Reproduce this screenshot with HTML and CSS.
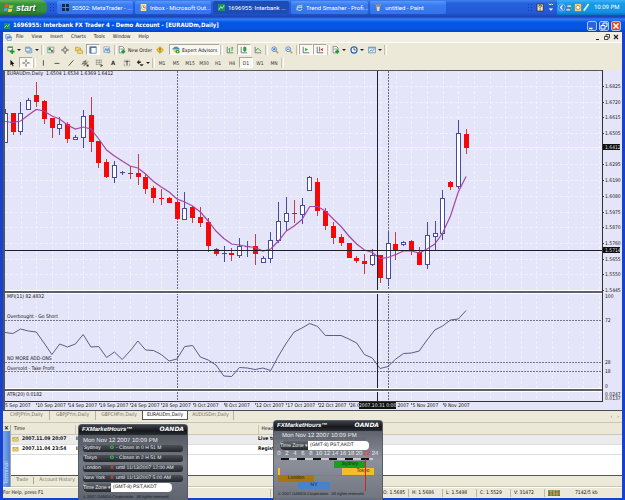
FILE: index.html
```html
<!DOCTYPE html>
<html lang="en">
<head>
<meta charset="utf-8">
<title>1696955: Interbank FX Trader 4 - Demo Account - [EURAUDm,Daily]</title>
<link rel="stylesheet" href="styles.css">
</head>
<body>
<svg class="defs" aria-hidden="true">
  <symbol id="i-add" viewBox="0 0 10 10"><path d="M1 1h6v5H1z" fill="#f4faf4" stroke="#5d8f68"/><path d="M1 1h6v1.500H1z" fill="#4b9a63"/><path d="M6.500 4v6M3.500 7h6" stroke="#12a022" stroke-width="2"/></symbol>
  <symbol id="i-profiles" viewBox="0 0 10 10"><path d="M2.500 3.500h6v5h-6z" fill="#cfe2f4" stroke="#6d93bb"/><path d="M.5 1.500h6v5h-6z" fill="#e9f3fc" stroke="#5f86b0"/><path d="M1 2h5v1.200H1z" fill="#5b8fc8"/></symbol>
  <symbol id="i-market" viewBox="0 0 10 10"><path d="M1 1.500h7.500v7H1z" fill="#eef6f6" stroke="#6a93a5"/><circle cx="3.500" cy="4" r="1.700" fill="#2aa24a"/><circle cx="6.300" cy="6.300" r="1.600" fill="#d0503a"/></symbol>
  <symbol id="i-target" viewBox="0 0 10 10"><circle cx="5" cy="5" r="2.700" fill="none" stroke="#777"/><path d="M5 0v4M5 6v4M0 5h4M6 5h4" stroke="#555"/></symbol>
  <symbol id="i-folder" viewBox="0 0 10 10"><path d="M.7 1.500h3l.8 1h2.500v3.500H.7z" fill="#f4d670" stroke="#b08d2c" stroke-width=".8"/><path d="M3.500 5h3l.8 1h2.200v3.200h-6z" fill="#f8df82" stroke="#b08d2c" stroke-width=".8"/></symbol>
  <symbol id="i-terminal" viewBox="0 0 10 10"><path d="M1 1h8v8H1z" fill="#fff" stroke="#4c78b4"/><path d="M1 1h8v1.500H1zM1 1h2v8H1z" fill="#4c78b4"/></symbol>
  <symbol id="i-tester" viewBox="0 0 10 10"><path d="M1 1h7v7H1z" fill="#eef4fb" stroke="#8aa5c8"/><path d="M2 7l1.500-4 1.500 3 1.500-3L8 6" fill="none" stroke="#3b72ad"/><circle cx="7" cy="7" r="1.700" fill="none" stroke="#7a93b4"/></symbol>
  <symbol id="i-order" viewBox="0 0 10 10"><path d="M1.500.5h4l2 2v6h-6z" fill="#fff" stroke="#777"/><path d="M3 3h3M3 4.500h3" stroke="#9ab"/><path d="M6.500 4.500v5M4 7h5" stroke="#14a526" stroke-width="2"/></symbol>
  <symbol id="i-warn" viewBox="0 0 10 10"><path d="M5 .8L9.200 5 5 9.200.8 5z" fill="#f6c53b" stroke="#b88a1c"/><path d="M5 2.500v3M5 6.500v1" stroke="#6a4a00" stroke-width="1.200"/></symbol>
  <symbol id="i-expert" viewBox="0 0 10 10"><path d="M.5 4Q5-2 9.500 4z" fill="#3f9fd8" stroke="#28719e" stroke-width=".6"/><path d="M1.500 4.500h6.500L7 8H2.500z" fill="#f0cb55"/><circle cx="7" cy="7" r="2.500" fill="#22a336"/><path d="M6.200 5.700L8.300 7 6.200 8.300z" fill="#fff"/></symbol>
  <symbol id="i-bars" viewBox="0 0 10 10"><path d="M1.500 1v7.500H9" fill="none" stroke="#666"/><path d="M4.500 2.500v5M4.500 4H3M7.500 1v5.500M7.500 2.500H9" stroke="#1d9a3a" fill="none"/></symbol>
  <symbol id="i-candles" viewBox="0 0 10 10"><path d="M1.500 1v7.500H9" fill="none" stroke="#666"/><path d="M6 .5v7" stroke="#18842c"/><path d="M4.500 2h3v4h-3z" fill="#26b544" stroke="#18842c" stroke-width=".7"/></symbol>
  <symbol id="i-line" viewBox="0 0 10 10"><path d="M1.500 1v7.500H9" fill="none" stroke="#666"/><path d="M2.500 6Q4 2 5.500 3.500T9 6.500" stroke="#1d9a3a" fill="none"/></symbol>
  <symbol id="i-zoomin" viewBox="0 0 10 10"><path d="M6 6l3 3" stroke="#c49a38" stroke-width="1.700"/><circle cx="4" cy="4" r="3" fill="#dceefc" stroke="#4a80c0"/><path d="M4 2.500v3M2.500 4h3" stroke="#2567b2"/></symbol>
  <symbol id="i-zoomout" viewBox="0 0 10 10"><path d="M6 6l3 3" stroke="#c49a38" stroke-width="1.700"/><circle cx="4" cy="4" r="3" fill="#dceefc" stroke="#4a80c0"/><path d="M2.500 4h3" stroke="#2567b2"/></symbol>
  <symbol id="i-scroll" viewBox="0 0 10 10"><path d="M1.500 1v7.500H9" fill="none" stroke="#555"/><path d="M4 2.500L7.500 4.500 4 6.500z" fill="#1fa53a"/></symbol>
  <symbol id="i-shift" viewBox="0 0 10 10"><path d="M1.500 1v7.500H9M4.500 1v6" fill="none" stroke="#555"/><path d="M5.500 4.500L8.500 2.500v4z" fill="#c0392b"/></symbol>
  <symbol id="i-clock" viewBox="0 0 10 10"><circle cx="5" cy="5" r="3.800" fill="#f2f8ff" stroke="#2766b0" stroke-width="1.500"/><path d="M5 2.700V5h2" fill="none" stroke="#335"/></symbol>
  <symbol id="i-template" viewBox="0 0 10 10"><path d="M.5 1.500h9v7h-9z" fill="#dcebf7" stroke="#6a8fb2"/><path d="M.5 1.500h9V3h-9z" fill="#6a9cc8"/><path d="M2 7l2-2 1.500 1L8 4" fill="none" stroke="#3a78a5"/></symbol>
  <symbol id="i-cursor" viewBox="0 0 10 10"><path d="M3 1v7l1.700-1.500L6 9.300l1-.5-1.200-2.600H8z" fill="#111"/></symbol>
  <symbol id="i-cross" viewBox="0 0 10 10"><path d="M5 .5v3.500M5 6v3.500M.5 5H4M6 5h3.500" stroke="#333"/></symbol>
  <symbol id="i-vline" viewBox="0 0 10 10"><path d="M5.500 1.500v7" stroke="#333"/></symbol>
  <symbol id="i-hline" viewBox="0 0 10 10"><path d="M2 5.500h6" stroke="#333"/></symbol>
  <symbol id="i-trend" viewBox="0 0 10 10"><path d="M2 8.500l6-7" stroke="#333"/></symbol>
  <symbol id="i-channel" viewBox="0 0 10 10"><path d="M1 7l6-6M3 9l6-6M2 3.500h5M1 6h7M5 2v6" stroke="#444" stroke-width=".8"/><path d="M7 7h2.500v2.500H7z" fill="#333"/></symbol>
  <symbol id="i-fibo" viewBox="0 0 10 10"><path d="M1 1.500h8M1 4h8M1 6.500h6" stroke="#555" stroke-dasharray="1.500 .5"/><path d="M7.500 6v4M7.500 8H10" stroke="#333"/></symbol>
  <symbol id="i-label" viewBox="0 0 10 10"><path d="M1.500 1.500h7v7h-7z" fill="none" stroke="#777" stroke-dasharray="1 1"/><path d="M3 3h4M5 3v4.500" stroke="#222"/></symbol>
  <symbol id="i-arrows" viewBox="0 0 10 10"><path d="M1 4L4 1v2h2v2H4v2z" fill="#222"/><path d="M9.500 7L7 9.500V8H5V6.500h4z" fill="#222"/></symbol>
  <symbol id="i-chart" viewBox="0 0 10 10"><path d="M0 0h10v10H0z" fill="#218a66"/><path d="M1 8l3-4 2 2 3-4" fill="none" stroke="#8be6a8" stroke-width="1.500"/></symbol>
  <symbol id="i-mail" viewBox="0 0 10 10"><path d="M.5 2.500h9v6h-9z" fill="#f7dd86" stroke="#b18e36"/><path d="M.5 2.500L5 6l4.500-3.500" fill="none" stroke="#b18e36"/></symbol>
</svg>

<div class="desktop">
  <header class="taskbar">
    <button class="start" type="button">
      <svg viewBox="0 0 12 12" aria-hidden="true"><path d="M1 2q2.500-1.500 4.500 0L4.700 5.500Q2.500 4.500.5 5.700z" fill="#f0532a"/><path d="M6.300 2.200q2.500 1.300 5 0l-1 3.500q-2.400 1.200-4.700 0z" fill="#8bd34a"/><path d="M.3 6.500q2.200-1.200 4.300 0L3.700 10q-2.200-1.300-4.300 0z" fill="#5a9cf5"/><path d="M5.400 6.700q2.500 1.200 4.800 0l-1 3.600q-2.400 1.200-4.700-.1z" fill="#fbd13c"/></svg>
      <span>start</span>
    </button>
    <span class="grip"></span>
    <nav class="tasks">
      <button type="button"><svg viewBox="0 0 10 10" aria-hidden="true"><path d="M0 0h10v10H0z" fill="#15294f"/><path d="M5 0v10M0 5h10" stroke="#6fa6e6"/></svg><span>50502: MetaTrader - ...</span></button>
      <button type="button"><svg viewBox="0 0 10 10" aria-hidden="true"><path d="M1 0h8v10H1z" fill="#fbe7a6"/><circle cx="5" cy="5" r="3" fill="#fff" stroke="#d8912a"/><path d="M5 3v2h2" stroke="#555" fill="none"/></svg><span>Inbox - Microsoft Out...</span></button>
      <button type="button" class="active"><svg aria-hidden="true"><use href="#i-chart"/></svg><span>1696955: Interbank ...</span></button>
      <button type="button"><svg viewBox="0 0 10 10" aria-hidden="true"><path d="M8.500 6.500A3.500 3.500 0 1 1 8.500 5H3" fill="none" stroke="#8fd4ff" stroke-width="1.700"/><path d="M1 9Q0 6 5 3t4.500-1" fill="none" stroke="#f4cd4a"/></svg><span>Trend Smasher - Profi...</span></button>
      <button type="button"><svg viewBox="0 0 10 10" aria-hidden="true"><path d="M2 4h5L6 10H3z" fill="#e9d9b5"/><path d="M3 4L1 0M4.500 4V0M6 4l2.500-4" stroke="#e0a23c" stroke-width="1.300"/></svg><span>untitled - Paint</span></button>
    </nav>
    <span class="grip"></span>
    <svg class="tools" viewBox="0 0 22 10" aria-hidden="true"><path d="M1 1h7v8H1z" fill="#efe7c8" stroke="#333"/><path d="M3 4q0-2 1.500-2T6 3.500L4.500 5v1M4.500 7v1" stroke="#222" fill="none"/><path d="M14 1l1.500 1L17 1M17 1l1 1 1-1" stroke="#fff" fill="none"/><path d="M14 6h5l-2.500 2.500z" fill="#fff"/></svg>
    <div class="tray">
      <svg viewBox="0 0 36 10" aria-hidden="true"><circle cx="4" cy="5" r="4" fill="#2f83ea" stroke="#9bd0ff" stroke-width=".7"/><path d="M5 2.500L2.800 5 5 7.500" fill="none" stroke="#fff" stroke-width="1.300"/><path d="M10 2h5v3h-5zM9 6h5v3H9z" fill="#b9d8ee" stroke="#355f91" stroke-width=".6"/><path d="M15.500 3v4" stroke="#41c452"/><path d="M19 1h7v8h-7z" fill="#f6d578"/><circle cx="22.500" cy="5" r="2.300" fill="#fff" stroke="#c38532"/><path d="M29 8.500L34.500 1" stroke="#eaf6ff" stroke-width="2"/></svg>
      <time>10:09 PM</time>
    </div>
  </header>

  <main class="window">
    <div class="titlebar">
      <svg aria-hidden="true"><use href="#i-chart"/></svg>
      <h1>1696955: Interbank FX Trader 4 - Demo Account - [EURAUDm,Daily]</h1>
      <div class="winbtns">
        <button type="button" aria-label="Minimize"><svg viewBox="0 0 8 8"><path d="M1 6.500h3.500" stroke="#fff" stroke-width="1.500"/></svg></button>
        <button type="button" aria-label="Restore"><svg viewBox="0 0 8 8"><path d="M3 3V1h4v3.500H5.500M1 3.500h4V7H1z" stroke="#fff" fill="none"/></svg></button>
        <button type="button" class="close" aria-label="Close"><svg viewBox="0 0 8 8"><path d="M1.500 1.500l5 5M6.500 1.500l-5 5" stroke="#fff" stroke-width="1.500"/></svg></button>
      </div>
    </div>

    <nav class="menubar">
      <svg viewBox="0 0 10 10" aria-hidden="true"><path d="M1 1h6v5H1zM3 4h6v5H3z" fill="#eaf4fd" stroke="#4c86c4"/><path d="M3 4h6v1.500H3z" fill="#4c86c4"/></svg>
      <a href="#file">File</a><a href="#view">View</a><a href="#insert">Insert</a><a href="#charts">Charts</a><a href="#tools">Tools</a><a href="#window">Window</a><a href="#help">Help</a>
      <div class="mdi">
        <button type="button" aria-label="Minimize chart"><svg viewBox="0 0 8 8"><path d="M2 6.500h3" stroke="#222"/></svg></button>
        <button type="button" aria-label="Restore chart"><svg viewBox="0 0 8 8"><path d="M3 3V1.500h3.500V5H5.500M1.500 3.500h3.500v3h-3.500z" stroke="#222" fill="none" stroke-width=".8"/></svg></button>
        <button type="button" aria-label="Close chart"><svg viewBox="0 0 8 8"><path d="M2 2l4 4M6 2L2 6" stroke="#222" stroke-width="1.200"/></svg></button>
      </div>
    </nav>

    <div class="toolbar">
      <button type="button" class="drop" aria-label="New chart"><svg><use href="#i-add"/></svg></button>
      <button type="button" class="drop" aria-label="Profiles"><svg><use href="#i-profiles"/></svg></button>
      <span class="sep"></span>
      <button type="button" aria-label="Market Watch"><svg><use href="#i-market"/></svg></button>
      <button type="button" aria-label="Data Window"><svg><use href="#i-target"/></svg></button>
      <button type="button" aria-label="Navigator"><svg><use href="#i-folder"/></svg></button>
      <button type="button" class="on" aria-label="Terminal"><svg><use href="#i-terminal"/></svg></button>
      <button type="button" aria-label="Strategy Tester"><svg><use href="#i-tester"/></svg></button>
      <span class="sep"></span>
      <button type="button" class="text"><svg><use href="#i-order"/></svg>New Order</button>
      <button type="button" aria-label="Alerts"><svg><use href="#i-warn"/></svg></button>
      <button type="button" class="text on"><svg><use href="#i-expert"/></svg>Expert Advisors</button>
      <span class="sep"></span>
      <button type="button" aria-label="Bar chart"><svg><use href="#i-bars"/></svg></button>
      <button type="button" class="on" aria-label="Candlesticks"><svg><use href="#i-candles"/></svg></button>
      <button type="button" aria-label="Line chart"><svg><use href="#i-line"/></svg></button>
      <span class="sep"></span>
      <button type="button" aria-label="Zoom in"><svg><use href="#i-zoomin"/></svg></button>
      <button type="button" aria-label="Zoom out"><svg><use href="#i-zoomout"/></svg></button>
      <span class="sep"></span>
      <button type="button" class="on" aria-label="Auto scroll"><svg><use href="#i-scroll"/></svg></button>
      <button type="button" class="on" aria-label="Chart shift"><svg><use href="#i-shift"/></svg></button>
      <span class="sep"></span>
      <button type="button" class="drop" aria-label="Indicators"><svg><use href="#i-order"/></svg></button>
      <button type="button" class="drop" aria-label="Periods"><svg><use href="#i-clock"/></svg></button>
      <button type="button" class="drop" aria-label="Templates"><svg><use href="#i-template"/></svg></button>
      <span class="sep"></span>
    </div>
    <div class="toolbar">
      <button type="button" aria-label="Cursor"><svg><use href="#i-cursor"/></svg></button>
      <button type="button" class="on" aria-label="Crosshair"><svg><use href="#i-cross"/></svg></button>
      <span class="sep"></span>
      <button type="button" aria-label="Vertical line"><svg><use href="#i-vline"/></svg></button>
      <button type="button" aria-label="Horizontal line"><svg><use href="#i-hline"/></svg></button>
      <button type="button" aria-label="Trendline"><svg><use href="#i-trend"/></svg></button>
      <button type="button" aria-label="Equidistant channel"><svg><use href="#i-channel"/></svg></button>
      <button type="button" aria-label="Fibonacci"><svg><use href="#i-fibo"/></svg></button>
      <button type="button" class="letter">A</button>
      <button type="button" aria-label="Text label"><svg><use href="#i-label"/></svg></button>
      <button type="button" class="drop" aria-label="Arrows"><svg><use href="#i-arrows"/></svg></button>
      <span class="sep"></span>
      <button type="button">M1</button><button type="button">M5</button><button type="button">M15</button><button type="button">M30</button><button type="button">H1</button><button type="button">H4</button><button type="button" class="on">D1</button><button type="button">W1</button><button type="button">MN</button>
      <span class="sep"></span>
    </div>

    <section class="chart">
      <div class="plot">
        <svg id="plot" viewBox="5 70 597 332" preserveAspectRatio="none" role="img" aria-label="EURAUDm daily candles, MFI and ATR"></svg>
        <p class="note n-symbol">EURAUDm,Daily&nbsp; 1.6504 1.6534 1.6369 1.6412</p>
        <p class="note n-mfi">MFI(11) 82.4832</p>
        <p class="note n-short">Overbought - Go Short</p>
        <p class="note n-addons">NO MORE ADD-ONS</p>
        <p class="note n-take">Oversold - Take Profit</p>
        <p class="note n-atr">ATR(20) 0.0182</p>
      </div>
      <svg id="axis" viewBox="602 70 20 332"></svg>
      <div class="dates">
        <span>5 Sep 2007</span><span>10 Sep 2007</span><span>14 Sep 2007</span><span>19 Sep 2007</span><span>24 Sep 2007</span><span>28 Sep 2007</span><span>3 Oct 2007</span><span>8 Oct 2007</span><span>12 Oct 2007</span><span>17 Oct 2007</span><span>22 Oct 2007</span><span>26 Oct 2007</span><span>31 Oct 2007</span><span>5 Nov 2007</span><span>9 Nov 2007</span>
        <b class="cursor-date">2007.10.31 0:00</b>
      </div>
    </section>

    <nav class="charttabs">
      <a href="#c1">CHFJPYm,Daily</a><a href="#c2">GBPJPYm,Daily</a><a href="#c3">GBPCHFm,Daily</a><a href="#c4" class="active">EURAUDm,Daily</a><a href="#c5">AUDUSDm,Daily</a>
      <div class="arrows"><button type="button" aria-label="Scroll left">‹</button><button type="button" aria-label="Scroll right">›</button></div>
    </nav>

    <section class="terminal">
      <div class="side"><button type="button" aria-label="Close terminal">×</button><span>Terminal</span></div>
      <div class="mailbox">
        <table>
          <thead><tr><th class="c-time">Time</th><th class="c-from">From</th><th>Headline</th></tr></thead>
          <tbody>
            <tr><td><svg aria-hidden="true"><use href="#i-mail"/></svg>2007.11.09 20:07</td><td>Interbank FX</td><td>Live trading will reopen in nearly one hour</td></tr>
            <tr><td><svg aria-hidden="true"><use href="#i-mail"/></svg>2007.11.04 23:54</td><td>Interbank FX</td><td>Registration</td></tr>
          </tbody>
        </table>
        <nav class="termtabs"><a href="#trade">Trade</a><a href="#history">Account History</a></nav>
      </div>
    </section>

    <footer class="status">
      <span class="help">For Help, press F1</span><span class="open">O: 1.5685</span><span>H: 1.5686</span><span>L: 1.5498</span><span>C: 1.5529</span><span>V: 31472</span>
      <span class="conn"><svg viewBox="0 0 12 6" aria-hidden="true"><path d="M0 0h12v6H0z" fill="#71983e"/><path d="M0 5.500h12M1 3h4M7 2h4" stroke="#b5472f" stroke-width="1.500"/><path d="M3 0v6M6 0v6M9 0v6" stroke="#d6d7a0" stroke-width=".6"/></svg>7142/5 kb</span>
    </footer>
  </main>

  <aside class="gadget g-list">
    <div class="ghead"><b>FXMarketHours™</b><strong>OANDA</strong></div>
    <p class="now">Mon Nov 12 2007 10:09 PM</p>
    <ul>
      <li><span>Sydney</span><i class="open">O</i>- Closes in 0 H 51 M</li>
      <li><span>Tokyo</span><i class="open">O</i>- Closes in 2 H 51 M</li>
      <li><span>London</span><i>X</i>until 11/13/2007 12:00 AM</li>
      <li><span>New York</span><i>X</i>until 11/13/2007 5:00 AM</li>
    </ul>
    <div class="zone"><button type="button">Time Zone ▾</button><span>(GMT-8) PST,AKDT</span></div>
    <p class="copy">© 2007 OANDA Corporation. &nbsp;All rights reserved.</p>
  </aside>

  <aside class="gadget g-bars">
    <div class="ghead"><b>FXMarketHours™</b><strong>OANDA</strong></div>
    <p class="now">Mon Nov 12 2007 10:09 PM</p>
    <div class="zone"><button type="button">Time Zone ▾</button><span>(GMT-8) PST,AKDT</span></div>
    <div class="hours"><span>0</span><span>2</span><span>4</span><span>6</span><span>8</span><span>10</span><span>12</span><span>14</span><span>16</span><span>18</span><span>20</span><span class="current">22</span><span>24</span></div>
    <div class="sessions">
      <span class="sydney">Sydney</span>
      <span class="tokyo-early"></span><span class="tokyo">Tokyo</span>
      <span class="london">London</span>
      <span class="ny">NY</span>
      <i class="needle"></i>
    </div>
    <p class="copy">© 2007 OANDA Corporation. &nbsp;All rights reserved.</p>
  </aside>
</div>
<script src="chart.js"></script>
</body>
</html>
```

FILE: styles.css
```css
* { box-sizing: border-box; }
body { margin: 0; font: 5px/6px "DejaVu Sans Condensed", "Liberation Sans", sans-serif; color: #111; background: #1244c8; text-rendering: geometricPrecision; }
button { font: inherit; color: inherit; border: 0; padding: 0; margin: 0; background: none; }
a { color: inherit; text-decoration: none; }
p, h1, ul { margin: 0; padding: 0; }
svg { display: block; }
.defs { position: absolute; width: 0; height: 0; }
.desktop { position: relative; min-height: 100vh; display: flex; flex-direction: column; overflow: hidden; }

/* taskbar */
.taskbar { display: flex; height: 17px; padding-bottom: 2px; color: #fff; background: linear-gradient(#3f83ee, #2560dc 20%, #2459d6 75%, #1a44b0); font-family: Roboto, "Liberation Sans", sans-serif; font-size: 6px; }
.start { display: flex; align-items: center; gap: 2px; width: 47px; padding-left: 4px; border-radius: 0 6px 6px 0; background: linear-gradient(#64b45c, #38923a 25%, #34903a 75%, #246b2a); font: italic bold 9px/12px "Liberation Sans", sans-serif; text-shadow: 1px 1px 1px #1d4a1f; }
.start svg { width: 10px; height: 10px; }
.grip { flex: none; width: 6px; margin: 3px 2px; background: radial-gradient(circle, #153fa0 1px, transparent 1px) 0 0 / 3px 3px; }
.tasks { flex: 1; display: flex; gap: 2px; padding: 1px 0; }
.tasks button { display: flex; align-items: center; gap: 3px; flex: 0 0 76px; padding-left: 5px; border-radius: 2px; background: linear-gradient(#5b98f8, #3a7cf0 30%, #3573e8); white-space: nowrap; }
.tasks .active { background: #1c4db4; }
.tasks svg { width: 7px; height: 7px; }
.tools { width: 22px; height: 9px; margin-top: 3px; }
.tray { display: flex; align-items: center; gap: 4px; width: 68px; padding-left: 1px; background: linear-gradient(#3cb1f6, #159ae9 25%, #1492e4 80%, #0f6fc2); white-space: nowrap; }
.tray svg { flex: none; width: 32px; height: 9px; }

/* window frame */
.window { flex: 1; display: flex; flex-direction: column; background: #ece9d8; border: solid #1642cf; border-width: 0 3px 2px; }
.titlebar { display: flex; align-items: center; gap: 3px; height: 15px; margin: 0 -3px; padding: 2px 4px 0; color: #fff; background: linear-gradient(#1b48be, #2f7df8 15%, #0557e6 35%, #0554e2 80%, #0345c4); }
.titlebar svg { width: 6px; height: 8px; }
.titlebar h1 { flex: 1; font: bold 6px/8px "DejaVu Sans Condensed", "Liberation Sans", sans-serif; }
.winbtns { display: flex; gap: 2px; }
.winbtns button { width: 10px; height: 10px; border: 1px solid #a9c3f5; border-radius: 2px; background: #2a63dc; }
.winbtns svg { width: 8px; height: 8px; }
.winbtns .close { background: #d84f2c; }
.menubar { display: flex; align-items: center; gap: 8px; height: 11px; padding: 0 2px; background: #f1efe4; border-bottom: 1px solid #fff; }
.menubar > svg { width: 7px; height: 7px; margin-right: -4px; }
.mdi { margin-left: auto; display: flex; gap: 1px; }
.mdi svg { width: 8px; height: 8px; }

/* toolbars */
.toolbar { display: flex; align-items: center; height: 13px; padding-left: 2px; }
.toolbar button { display: flex; align-items: center; justify-content: center; width: 14px; height: 11px; color: #333; }
.toolbar svg { width: 8px; height: 8px; }
.toolbar .on { background: #f8f7f2; border: 1px solid; border-color: #aca899 #fff #fff #aca899; }
.toolbar .drop { width: 18px; }
.toolbar .drop::after { content: ""; margin-left: 2px; border: solid transparent; border-width: 2px 2px 0; border-top-color: #222; }
.toolbar .text { width: auto; gap: 2px; padding: 0 1px; color: #111; }
.toolbar .text.on { margin-left: 2px; padding: 0 2px; }
.toolbar .letter { font-size: 6px; font-weight: bold; }
.sep { width: 3px; height: 10px; border-left: 1px solid #c5c2b2; border-right: 1px solid #fff; background: #ece9d8; }

/* chart */
.chart { display: grid; grid-template-columns: 1fr 20px; margin-top: 1px; border-left: 2px solid #4f5560; border-bottom: 1px solid #4a4a58; background: #e5e5f9; }
.plot { position: relative; }
.plot svg { width: 100%; height: 332px; }
#axis { width: 20px; height: 332px; font-size: 5px; }
.note { position: absolute; left: 2px; white-space: nowrap; }
.n-symbol { top: 1px; }
.n-mfi { top: 224px; }
.n-short { top: 244px; }
.n-addons { top: 286px; }
.n-take { top: 296px; }
.n-atr { top: 322px; }
.dates { position: relative; display: grid; grid-template-columns: repeat(19, 1fr); height: 8px; padding: 1px 3px 0 0; white-space: nowrap; }
.dates span { min-width: 0; border-left: 1px solid #777; height: 2px; }
.dates span:first-child { border-left: 0; }
.cursor-date { position: absolute; left: 354px; top: 0; padding-top: 1px; height: 7px; color: #e8e8e8; background: #111; font-weight: normal; }

.charttabs { display: flex; height: 12px; padding: 0 3px 1px 1px; color: #777263; border-bottom: 1px solid #c8c5b4; }
.charttabs a { width: 46px; height: 9px; line-height: 9px; text-align: center; border-right: 1px solid #b5b2a2; white-space: nowrap; }
.charttabs a:nth-child(3) { border-right: 0; }
.charttabs .active { color: #111; background: #fff; border: 1px solid #555; border-top: 0; }
.arrows { margin-left: auto; display: flex; gap: 5px; }

/* terminal */
.terminal { display: flex; flex: 1; min-height: 64px; }
.side { display: flex; flex-direction: column; width: 7px; margin-top: 1px; }
.side button { height: 7px; font-size: 7px; font-weight: bold; }
.side span { flex: 1; writing-mode: vertical-rl; transform: rotate(180deg); padding-top: 3px; color: #c8dcff; background: linear-gradient(90deg, #4c7fd2, #7fa8ea); font-size: 6px; line-height: 7px; }
.mailbox { flex: 1; display: flex; flex-direction: column; margin-top: 2px; background: #fff; border-left: 1px solid #aca899; }
table { width: 100%; table-layout: fixed; border-collapse: collapse; }
th { height: 9px; padding: 0 3px; text-align: left; font-weight: normal; background: #ebe8d8; border-bottom: 1px solid #cbc7b8; }
th:nth-child(n+2) { border-left: 1px solid #cbc7b8; }
.c-time { width: 64px; }
.c-from { width: 183px; }
td { height: 10px; padding: 0 1px; font-weight: bold; border-bottom: 1px solid #ddd; white-space: nowrap; }
tbody tr:first-child { background: #ebebeb; }
td svg { display: inline-block; width: 7px; height: 6px; margin-right: 3px; vertical-align: middle; }
td:nth-child(3) { padding-left: 0; }
.termtabs { margin-top: auto; display: flex; height: 12px; background: #ece9d8; border-top: 1px solid #555; border-bottom: 1px solid #c9c5b5; color: #777263; padding: 1px 0; }
.termtabs a { padding: 0 5px; line-height: 7px; height: 7px; border-right: 1px solid #aaa798; }

.status { display: flex; height: 11px; align-items: center; border-top: 1px solid #fff; }
.status span { width: 34px; height: 8px; line-height: 8px; padding-left: 3px; border-left: 1px solid #bab7a6; white-space: nowrap; }
.status .help { flex: 1; padding-left: 0; border: 0; }
.status .open { width: 138px; padding-left: 112px; }
.status .conn { width: 78px; display: flex; align-items: center; gap: 15px; }
.status .conn svg { width: 12px; height: 6px; }

/* desktop gadgets */
.gadget { position: absolute; bottom: 0; width: 110px; padding: 0 4px; overflow: hidden; color: #e8ecf2; font: 5px/6px "Liberation Sans", sans-serif; border: 1px solid #555c68; border-bottom: 0; border-radius: 4px 4px 0 0; }
.g-list { left: 78px; height: 76px; background: linear-gradient(#30333a, #555962 14%, #757a84 50%, #5f6570); }
.g-bars { left: 273px; height: 80px; background: linear-gradient(#30333a, #5c606af4 14%, #868b96f4 50%, #6a707cf4); }
.ghead { display: flex; justify-content: space-between; align-items: center; height: 10px; margin: 0 -4px; padding: 0 3px; color: #fff; background: linear-gradient(#3d4048, #15171b 60%, #2a2d33); }
.ghead b { font: italic bold 6px/8px "Liberation Sans", sans-serif; }
.ghead strong { font: italic 900 6px/8px "DejaVu Sans", sans-serif; }
.now { font-size: 6px; line-height: 8px; margin-top: 2px; white-space: nowrap; }
.gadget ul { list-style: none; }
.gadget li { display: flex; height: 7px; margin-bottom: 3px; padding-left: 1px; border-radius: 3px; background: linear-gradient(#4b4f57, #23262b); line-height: 7px; white-space: nowrap; }
.gadget li span { width: 26px; }
.gadget li i { width: 6px; color: #e2452e; font-style: normal; font-weight: bold; }
.gadget li .open { color: #2fe04a; }
.zone { display: flex; height: 9px; width: 89px; border-radius: 4px; overflow: hidden; background: #fff; color: #222; line-height: 9px; white-space: nowrap; }
.zone button { width: 28px; color: #e4e4e4; background: linear-gradient(#666a72, #24262b); }
.zone span { padding-left: 2px; }
.copy { margin-top: 2px; font-size: 4px; line-height: 5px; white-space: nowrap; color: #15181d; }
.g-list .zone { margin-top: -2px; }
.g-bars .now { margin: 1px 0 0 4px; }
.g-bars .zone { margin: 1px 0 0 2px; }
.hours { display: grid; grid-template-columns: repeat(13, 8px); height: 9px; margin: 1px 0 1px -3px; font-size: 6px; line-height: 7px; text-align: center; background: repeating-linear-gradient(90deg, #111 0 8px, #c8ccd2 8px 16px) 6px 7px / 92px 2px no-repeat; }
.hours span { display: flex; justify-content: center; }
.hours .current { color: #e23a3a; }
.sessions { position: relative; display: grid; grid-template-columns: repeat(24, 4px); grid-template-rows: repeat(4, 7px); color: #222; text-align: center; line-height: 7px; }
.sydney { grid-area: 1 / 15 / 2 / 23; background: #16a01e; }
.tokyo-early { grid-area: 2 / 1 / 4 / 2; width: 2px; background: #f5bd2c; }
.tokyo { grid-area: 2 / 17 / 3 / 25; background: #f5bd2c; padding-left: 10px; }
.london { grid-area: 3 / 1 / 4 / 10; background: #a8760f; }
.ny { grid-area: 4 / 6 / 5 / 14; background: #4783cc; }
.needle { position: absolute; left: 87px; top: -2px; width: 1px; height: 32px; background: #d8202a; }
```

FILE: chart.js
```js
// Candles: [direction, body top, body bottom, high, low] in plot units.
const candles = [
  ["u",113,142,109,142],["d",113,132,113,135],["u",113,131,102,135],["u",100,109,98,110],["d",95,102,82,107],
  ["d",101,119,100,124],["d",118,128,118,138],["u",124,128,117,135],["d",124,139,122,143],["u",137,139,135,139],
  ["u",116,137,110,148],["d",115,142,97,152],["d",141,163,141,168],["d",162,177,159,178],["u",165,177,161,183],
  ["u",172,172,171,175],["d",173,174,166,179],["d",173,177,154,185],["d",177,189,174,194],["d",188,198,186,203],
  ["d",198,199,189,205],["d",198,203,197,203],["d",202,219,202,220],["u",208,219,192,220],["d",207,218,206,223],
  ["d",217,223,207,227],["d",222,246,218,252],["d",249,254,248,256],["u",253,253,246,262],["d",253,255,248,261],
  ["u",246,255,238,258],["u",246,246,241,257],["d",246,254,234,265],["u",258,262,256,262],["u",240,258,232,263],
  ["u",221,240,202,243],["u",213,221,197,231],["d",213,214,200,223],["u",205,214,198,224],["u",177,190,176,191],
  ["d",182,211,178,216],["d",211,226,208,230],["d",226,238,222,244],["d",237,243,234,246],["d",243,258,243,258],
  ["d",258,261,256,263],["d",261,264,254,274],["u",255,264,249,266],["d",255,278,255,283],["u",243,278,232,286],
  ["d",244,251,232,260],["u",242,244,241,246],["d",241,251,240,255],["d",252,265,247,265],["u",235,264,222,269],
  ["u",233,236,221,250],["u",198,233,190,240],["d",182,187,181,190],["u",133,186,120,189],["d",134,148,129,154]
];
const average = [121.5,122.5,121,115,109.5,111,116,119,125,129,127,129,139,150,156,161,166,168,174,181.5,187,192,199,202,206,212,221,231,238.5,244,245,246.5,247.5,251,249,241,231,226,219.5,206.5,206.5,211,219,226.5,236,244,250,252.5,258.5,257.5,254.5,251,251,253,249,244,233,216,192,176.5];
const mfi = [332.5,333.5,329,331,332,343,354.5,344,347,344,334.5,347,346.5,357.5,352,359.5,351,341,350,350.5,354.5,361,359,346.5,345.5,357,360,365,376,376.5,367.5,368,369.5,368,370.5,356,343,332,328,323.5,326.5,335.5,335.5,335.5,339,343,354.5,358,368.5,366.5,359,353.5,353,351,340,330,326,320,319,310.5];
const prices = ["1.6825","1.6720","1.6615","1.6505","1.6400","1.6295","1.6190","1.6080","1.5975","1.5870","1.5760","1.5655","1.5550","1.5445"];

const step = 7.815;
const xAt = i => 5 + i * step;
const priceY = i => 86 + i * 204 / 13;
const line = (x1, y1, x2, y2, stroke, extra = "") => `<path d="M${x1} ${y1}L${x2} ${y2}" stroke="${stroke}" fill="none" ${extra}/>`;
const curve = (ys, stroke, width) => `<polyline points="${ys.map((y, i) => xAt(i) + "," + y).join(" ")}" fill="none" stroke="${stroke}" stroke-width="${width}"/>`;

let s = "";
for (let i = 2; i < 77; i += 2) s += line(Math.round(xAt(i)) + .5, 71, Math.round(xAt(i)) + .5, 401, "#f1f1fc", 'stroke-dasharray="3 2"');
prices.forEach((p, i) => { s += line(5, Math.round(priceY(i)) + .5, 602, Math.round(priceY(i)) + .5, "#f1f1fc", 'stroke-dasharray="3 2"'); });
s += line(5, 147.5, 602, 147.5, "#f8ecef");
[320.5, 362.5, 371.5].forEach(y => { s += line(5, y, 602, y, "#77778c", 'stroke-dasharray="2 1"'); });
[177.5, 388.5].forEach(x => { s += line(x, 71, x, 401, "#6a6a7c", 'stroke-dasharray="2 1"'); });
candles.forEach(([dir, top, bottom, high, low], i) => {
  const x = Math.round(xAt(i) - .3), up = dir === "u", ink = up ? "#4a4aa0" : "#c83c46";
  s += line(x + .5, high, x + .5, low, ink);
  s += up
    ? `<rect x="${x - 1.5}" y="${top + .5}" width="4" height="${Math.max(bottom - top, 0.1)}" fill="#fff" stroke="${ink}"/>`
    : `<rect x="${x - 2}" y="${top}" width="5" height="${bottom - top}" fill="#f40808"/>`;
});
s += curve(average, "#a546a5", 1.2) + curve(mfi, "#4c4c78", .9);
s += line(5, 250.5, 602, 250.5, "#202028") + line(377.5, 71, 377.5, 402, "#202028");
s += line(5, 70.5, 602, 70.5, "#555560");
[292, 390].forEach(y => { s += line(5, y, 602, y, "#fff", 'stroke-width="4"') + line(5, y, 602, y, "#5f6064", 'stroke-width="2"'); });
s += line(5, 401.5, 602, 401.5, "#333");
document.getElementById("plot").innerHTML = s;

const label = (y, text, fill = "#222") => `<text x="605" y="${y + 2}" fill="${fill}">${text}</text>`;
let a = line(602.5, 70, 602.5, 402, "#333");
prices.forEach((p, i) => {
  const y = Math.round(priceY(i));
  a += line(603, y + .5, 604, y + .5, "#333");
  if (i !== 4) a += label(y, p);
});
a += `<rect x="603" y="144" width="17" height="6" fill="#111"/><rect x="603" y="247" width="17" height="6" fill="#111"/>`;
a += label(147, "1.6412", "#ddd") + label(250, "1.5714", "#ddd");
[[296, "100"], [320, "72"], [362, "28"], [371, "18"], [386, "0"], [394, "0.0247"], [398, "0.0137"]].forEach(([y, t]) => { a += label(y, t); });
document.getElementById("axis").innerHTML = a;
```
